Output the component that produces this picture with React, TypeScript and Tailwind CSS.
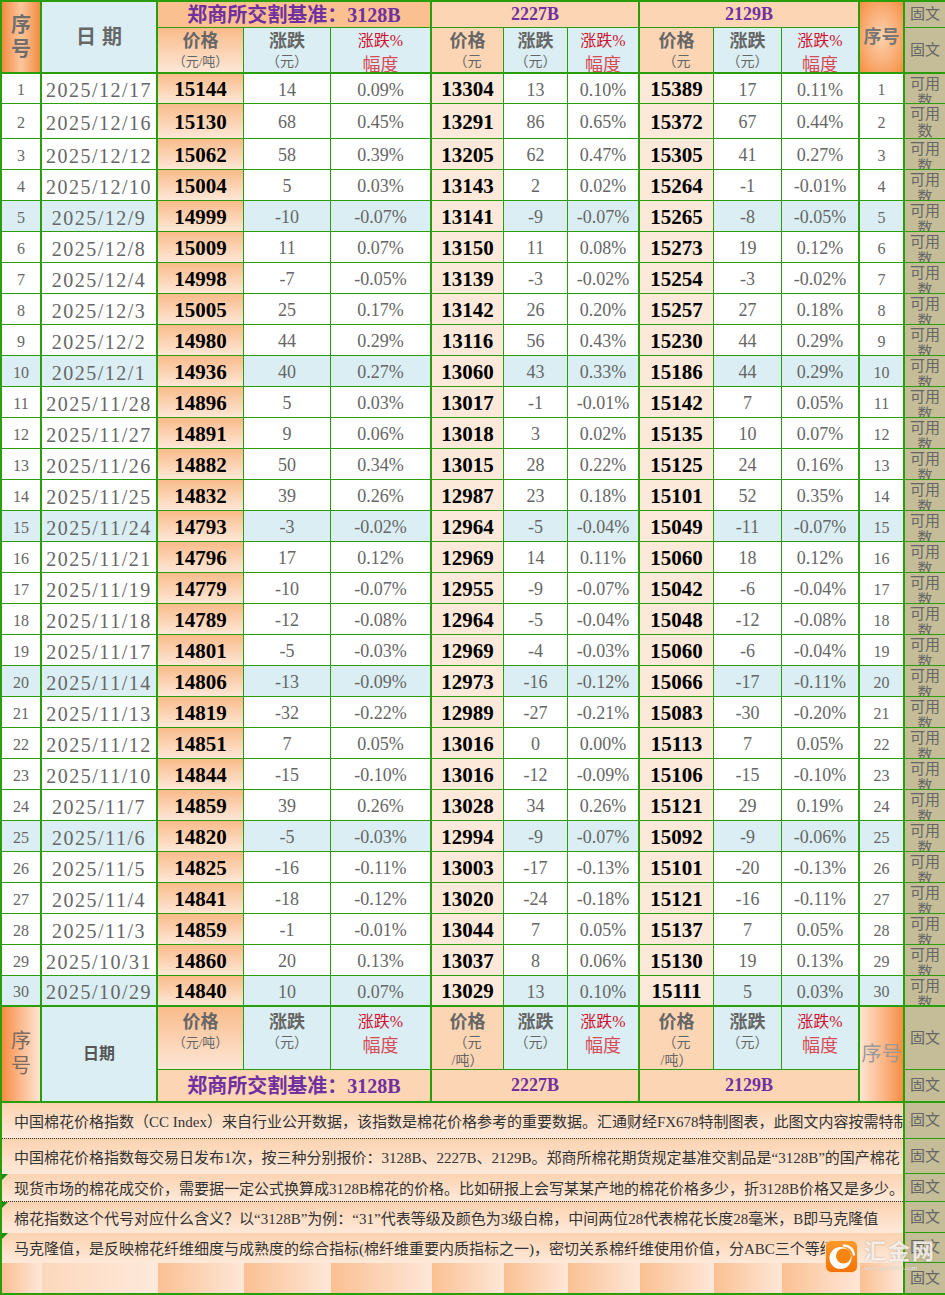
import clsx from "clsx";
import { Fragment } from "react";
import type { ReactNode } from "react";

const raw = `2025/12/17 15144 14 0.09% 13304 13 0.10% 15389 17 0.11%
2025/12/16 15130 68 0.45% 13291 86 0.65% 15372 67 0.44%
2025/12/12 15062 58 0.39% 13205 62 0.47% 15305 41 0.27%
2025/12/10 15004 5 0.03% 13143 2 0.02% 15264 -1 -0.01%
2025/12/9 14999 -10 -0.07% 13141 -9 -0.07% 15265 -8 -0.05%
2025/12/8 15009 11 0.07% 13150 11 0.08% 15273 19 0.12%
2025/12/4 14998 -7 -0.05% 13139 -3 -0.02% 15254 -3 -0.02%
2025/12/3 15005 25 0.17% 13142 26 0.20% 15257 27 0.18%
2025/12/2 14980 44 0.29% 13116 56 0.43% 15230 44 0.29%
2025/12/1 14936 40 0.27% 13060 43 0.33% 15186 44 0.29%
2025/11/28 14896 5 0.03% 13017 -1 -0.01% 15142 7 0.05%
2025/11/27 14891 9 0.06% 13018 3 0.02% 15135 10 0.07%
2025/11/26 14882 50 0.34% 13015 28 0.22% 15125 24 0.16%
2025/11/25 14832 39 0.26% 12987 23 0.18% 15101 52 0.35%
2025/11/24 14793 -3 -0.02% 12964 -5 -0.04% 15049 -11 -0.07%
2025/11/21 14796 17 0.12% 12969 14 0.11% 15060 18 0.12%
2025/11/19 14779 -10 -0.07% 12955 -9 -0.07% 15042 -6 -0.04%
2025/11/18 14789 -12 -0.08% 12964 -5 -0.04% 15048 -12 -0.08%
2025/11/17 14801 -5 -0.03% 12969 -4 -0.03% 15060 -6 -0.04%
2025/11/14 14806 -13 -0.09% 12973 -16 -0.12% 15066 -17 -0.11%
2025/11/13 14819 -32 -0.22% 12989 -27 -0.21% 15083 -30 -0.20%
2025/11/12 14851 7 0.05% 13016 0 0.00% 15113 7 0.05%
2025/11/10 14844 -15 -0.10% 13016 -12 -0.09% 15106 -15 -0.10%
2025/11/7 14859 39 0.26% 13028 34 0.26% 15121 29 0.19%
2025/11/6 14820 -5 -0.03% 12994 -9 -0.07% 15092 -9 -0.06%
2025/11/5 14825 -16 -0.11% 13003 -17 -0.13% 15101 -20 -0.13%
2025/11/4 14841 -18 -0.12% 13020 -24 -0.18% 15121 -16 -0.11%
2025/11/3 14859 -1 -0.01% 13044 7 0.05% 15137 7 0.05%
2025/10/31 14860 20 0.13% 13037 8 0.06% 15130 19 0.13%
2025/10/29 14840 10 0.07% 13029 13 0.10% 15111 5 0.03%`;

const data = raw.split("\n").map((l) => l.trim().split(/\s+/));

const notes = [
  { text: "中国棉花价格指数（CC Index）来自行业公开数据，该指数是棉花价格参考的重要数据。汇通财经FX678特制图表，此图文内容按需特制作", h: "h-[36px]", line: true, mark: false },
  { text: "中国棉花价格指数每交易日发布1次，按三种分别报价：3128B、2227B、2129B。郑商所棉花期货规定基准交割品是“3128B”的国产棉花", h: "h-[35px]", line: false, mark: false },
  { text: "现货市场的棉花成交价，需要据一定公式换算成3128B棉花的价格。比如研报上会写某某产地的棉花价格多少，折3128B价格又是多少。", h: "h-[28px]", line: true, mark: true },
  { text: "棉花指数这个代号对应什么含义？以“3128B”为例：“31”代表等级及颜色为3级白棉，中间两位28代表棉花长度28毫米，B即马克隆值", h: "h-[31px]", line: false, mark: true },
  { text: "马克隆值，是反映棉花纤维细度与成熟度的综合指标(棉纤维重要内质指标之一)，密切关系棉纤维使用价值，分ABC三个等级", h: "h-[30px]", line: false, mark: true },
];

// right border of each of the 13 columns
const rb = ["border-r-2", "border-r-2", "border-r", "border-r", "border-r-2", "border-r", "border-r", "border-r-2", "border-r", "border-r", "border-r-2", "", ""];

const cell = "flex items-center justify-center overflow-hidden border-[#2a9d0a]";
const head = "flex flex-col items-center justify-start overflow-hidden border-[#2a9d0a] text-[#666]";
const tan = "flex items-center justify-center overflow-hidden border-[#2a9d0a] border-l-2 bg-[#c4bd97] text-[15px] text-[#666]";

// split: narrow column, unit wraps; short: only the first line fits in the cell
function PriceLabel({ split, short }: { split: boolean; short: boolean }) {
  return (
    <>
      <span className="text-[18px] leading-[24px] font-bold">价格</span>
      {split ? (
        <>
          <span className="text-[14px] leading-[18px]">（元</span>
          {!short && <span className="text-[14px] leading-[18px]">/吨）</span>}
        </>
      ) : (
        <span className="text-[13px] leading-[18px]">（元/吨）</span>
      )}
    </>
  );
}

function ChangeLabel() {
  return (
    <>
      <span className="text-[18px] leading-[24px] font-bold">涨跌</span>
      <span className="text-[14px] leading-[18px]">（元）</span>
    </>
  );
}

function PctLabel() {
  return (
    <>
      <span className="text-[16px] leading-[24px] text-[#d0102e]">涨跌%</span>
      <span className="text-[18px] leading-[24px] text-[#d84a56]">幅度</span>
    </>
  );
}

function SubHeads({ h, bb, pt, short }: { h: string; bb: string; pt: string; short: boolean }) {
  const groups = [
    "bg-linear-to-b from-[#f9bb8a] to-[#fde7d6]",
    "bg-[#fcd5b4]",
    "bg-[#fcd5b4]",
  ];
  return (
    <>
      {groups.map((bg, g) => (
        <Fragment key={g}>
          <div className={clsx(head, h, bb, pt, "border-r", bg)}>
            <PriceLabel split={g > 0} short={short} />
          </div>
          <div className={clsx(head, h, bb, pt, "border-r bg-[#daeef3]")}>
            <ChangeLabel />
          </div>
          <div className={clsx(head, h, bb, pt, "border-r-2 bg-[#daeef3]")}>
            <PctLabel />
          </div>
        </Fragment>
      ))}
    </>
  );
}

function Titles({ h, bb, first }: { h: string; bb: string; first: string }) {
  const t = "col-span-3 border-r-2 text-[#7030a0] font-bold";
  return (
    <>
      <div className={clsx(cell, t, h, bb, first, "text-[20px]")}>郑商所交割基准：3128B</div>
      <div className={clsx(cell, t, h, bb, "bg-[#fcd5b4] text-[18px]")}>2227B</div>
      <div className={clsx(cell, t, h, bb, "bg-[#fcd5b4] text-[18px]")}>2129B</div>
    </>
  );
}

function Tan({ className, children }: { className?: string; children: ReactNode }) {
  return <div className={clsx(tan, className)}>{children}</div>;
}

function Logo() {
  return (
    <div className="pointer-events-none absolute left-[825px] top-[1240px] flex items-start gap-[6px]">
      <svg width="33" height="33" viewBox="0 0 33 33">
        <defs>
          <linearGradient id="lg" x1="0" y1="0" x2="0" y2="1">
            <stop offset="0" stopColor="#ff9a2a" />
            <stop offset="1" stopColor="#f27208" />
          </linearGradient>
        </defs>
        <rect x="0.5" y="0.5" width="32" height="32" rx="6" fill="url(#lg)" stroke="#ffd9b0" strokeWidth="1" />
        <circle cx="15.5" cy="18" r="11" fill="#fff" />
        <circle cx="18.5" cy="16" r="7.5" fill="#f58412" />
        <path d="M19 5.5 C24.5 5.8 28.5 9.5 28.8 14.5" fill="none" stroke="#fff" strokeWidth="2.6" strokeLinecap="round" />
      </svg>
      <div className="flex flex-col items-start">
        <span className="text-[22px] leading-[24px] font-bold tracking-[2px] text-white/80 [text-shadow:0_0_2px_rgba(120,90,60,0.5)]">汇金网</span>
        <span className="text-[7px] leading-[9px] text-white/90 [text-shadow:0_0_1px_rgba(120,90,60,0.6)]">www.gold678.com</span>
      </div>
    </div>
  );
}

export default function App() {
  return (
    <div className="relative w-[945px] h-[1295px] overflow-hidden bg-white font-['Liberation_Serif','Noto_Sans_CJK_SC',serif]">
      <div className="grid grid-cols-[40px_116px_86px_87px_101px_72px_64px_72px_74px_68px_78px_43px_42px] border-t-2 border-l-2 border-[#2a9d0a]">
        {/* top header */}
        <div className={clsx(cell, "row-span-2 flex-col border-r-2 border-b-2 bg-linear-to-r from-[#f28b3e] via-[#fbc69c] to-[#f28b3e] text-[20px] leading-[24px] font-bold text-[#6e6e6e]")}>
          <span>序</span>
          <span>号</span>
        </div>
        <div className={clsx(cell, "row-span-2 border-r-2 border-b-2 bg-[#daeef3] text-[20px] font-bold tracking-[6px] pl-[6px] text-[#666]")}>日期</div>
        <Titles h="h-[26px]" bb="border-b" first="bg-[#fac090]" />
        <div className={clsx(cell, "row-span-2 bg-radial from-[#fcd2ae] to-[#f58f40] text-[18px] font-bold text-[#777] border-b-2")}>序号</div>
        <Tan className="h-[26px] border-b">固文</Tan>
        <SubHeads h="h-[46px]" bb="border-b-2" pt="pt-[1px]" short />
        <Tan className="h-[46px] border-b-2">固文</Tan>

        {/* data rows */}
        {data.map((r, i) => {
          const h = i === 0 ? "h-[30px]" : i === 1 ? "h-[35px]" : "h-[31px]";
          const bb = i === data.length - 1 ? "border-b-2" : "border-b";
          const bg = (i + 1) % 5 === 0 ? "bg-[#daeef3]" : "bg-white";
          const base = clsx(cell, h, bb, "pt-[3px]");
          const grey = "text-[18px] text-[#666]";
          const price = "text-[21px] font-bold text-black";
          return (
            <Fragment key={i}>
              <div className={clsx(base, rb[0], bg, "text-[16px] text-[#666]")}>{i + 1}</div>
              <div className={clsx(base, rb[1], bg, "text-[20px] tracking-[1.5px] text-[#666]")}>{r[0]}</div>
              <div className={clsx(base, rb[2], price, "bg-linear-to-b from-[#f9bb8a] to-[#fde7d6]")}>{r[1]}</div>
              <div className={clsx(base, rb[3], bg, grey)}>{r[2]}</div>
              <div className={clsx(base, rb[4], bg, grey)}>{r[3]}</div>
              <div className={clsx(base, rb[5], price, "bg-[#fde9d9]")}>{r[4]}</div>
              <div className={clsx(base, rb[6], bg, grey)}>{r[5]}</div>
              <div className={clsx(base, rb[7], bg, grey)}>{r[6]}</div>
              <div className={clsx(base, rb[8], price, "bg-[#fde9d9]")}>{r[7]}</div>
              <div className={clsx(base, rb[9], bg, grey)}>{r[8]}</div>
              <div className={clsx(base, rb[10], bg, grey)}>{r[9]}</div>
              <div className={clsx(base, bg, "text-[16px] text-[#666]")}>{i + 1}</div>
              <div className={clsx(tan, h, bb, "items-start pt-[2px]")}>
                <div className="w-full text-center leading-[17px]">可用数</div>
              </div>
            </Fragment>
          );
        })}

        {/* bottom header */}
        <div className={clsx(cell, "row-span-2 flex-col border-r-2 border-b-2 bg-linear-to-r from-[#f58d3e] to-[#fde4d2] text-[20px] leading-[25px] text-[#7a6a60]")}>
          <span>序</span>
          <span>号</span>
        </div>
        <div className={clsx(cell, "row-span-2 border-r-2 border-b-2 bg-[#daeef3] text-[16px] font-bold text-[#555]")}>日期</div>
        <SubHeads h="h-[63px]" bb="border-b" pt="pt-[3px]" short={false} />
        <div className={clsx(cell, "row-span-2 border-b-2 bg-linear-to-r from-[#fde4d2] to-[#f58d3e] text-[20px] text-[#999]")}>序号</div>
        <Tan className="h-[63px] border-b">固文</Tan>
        <Titles h="h-[33px]" bb="border-b-2" first="bg-[#fcd5b4]" />
        <Tan className="h-[33px] border-b-2">固文</Tan>

        {/* notes */}
        {notes.map((n, i) => (
          <Fragment key={i}>
            <div
              className={clsx(
                "relative col-span-12 flex items-center overflow-hidden whitespace-nowrap pl-[12px] pt-[3px] bg-linear-to-b from-[#fcd3b0] to-[#fee9da] text-[15px] text-[#333]",
                n.h,
                n.line && "border-b border-dotted border-[#333]"
              )}
            >
              {n.mark && (
                <span className="absolute left-0 top-0 h-0 w-0 border-t-[6px] border-r-[6px] border-t-[#1f8a12] border-r-transparent" />
              )}
              {n.text}
            </div>
            <Tan className={clsx(n.h, "border-b")}>固文</Tan>
          </Fragment>
        ))}

        {/* bottom band */}
        {rb.slice(0, 12).map((_, i) => (
          <div
            key={i}
            className={clsx(
              "h-[32px] border-b-2 border-[#2a9d0a] bg-linear-to-r",
              i === 1 ? "from-[#fcd8bb] to-[#fee9dc]" : "from-[#fac092] to-[#fee7d8]"
            )}
          />
        ))}
        <Tan className="h-[32px] border-b-2">固文</Tan>
      </div>
      <Logo />
    </div>
  );
}
